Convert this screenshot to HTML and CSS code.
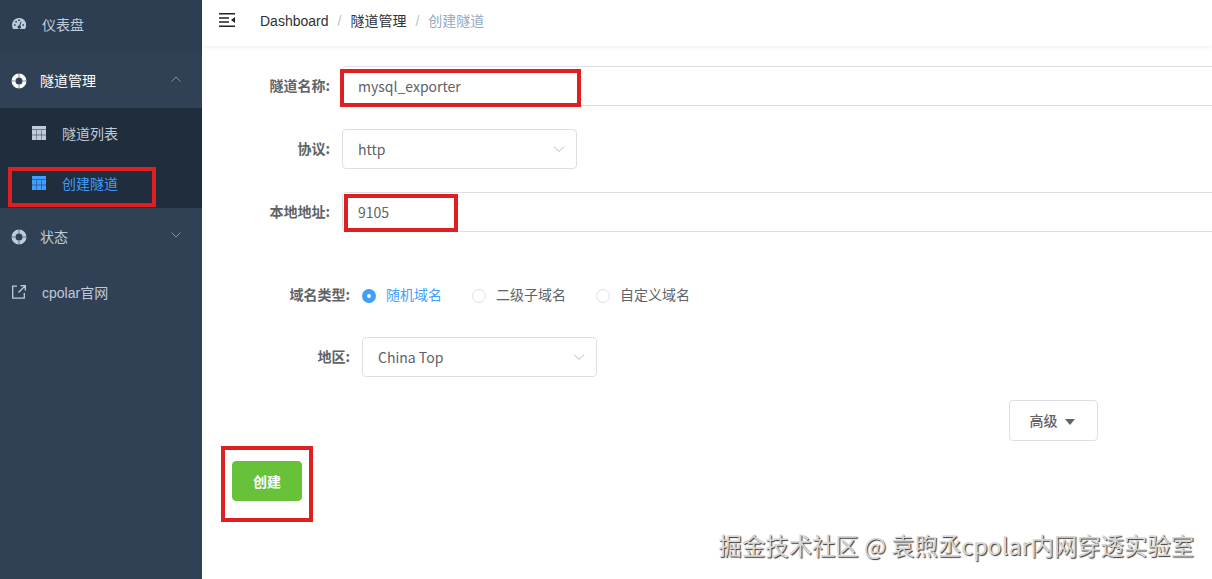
FILE: index.html
```html
<!DOCTYPE html>
<html lang="zh-CN">
<head>
    <meta charset="UTF-8">
    <meta name="viewport" content="width=device-width, initial-scale=1.0">
    <title>创建隧道</title>
    <link rel="stylesheet" href="styles.css">
</head>
<body>
    <div class="app">
        <aside class="sidebar">
            <a class="menu-item hover">
                <svg class="icon" viewBox="0 0 14 14"><path fill="currentColor" fill-rule="evenodd" d="M7 1a7 7 0 0 0-7 7c0 1.500.4 2.800 1.100 4h11.800A7 7 0 0 0 7 1zM2 7.200h1.600v1.600H2zM3.300 3.900h1.600v1.600H3.300zM6.200 2.500h1.600v1.600H6.200zM10.400 7.200H12v1.600h-1.600zM8.700 4.300l.8.300-1.300 4.100a1.600 1.600 0 1 1-1-.3z"/></svg>
                <span>仪表盘</span>
            </a>
            <a class="menu-item sub opened">
                <svg class="icon ring" viewBox="0 0 16 16"><circle cx="8" cy="8" r="5.500" fill="none" stroke="currentColor" stroke-width="4"/><path stroke="#304156" stroke-width=".6" d="M8 0v4.500M8 11.500V16M0 8h4.500M11.500 8H16"/></svg>
                <span>隧道管理</span>
                <svg class="arrow" viewBox="0 0 12 12"><path d="M1.500 8.500L6 4l4.500 4.500"/></svg>
            </a>
            <div class="submenu">
                <a class="submenu-item">
                    <svg class="icon" viewBox="0 0 14 14"><path fill="currentColor" d="M0 0h14v3.400H0zM0 4h4.500v4.800H0zM4.900 4h4.200v4.800H4.900zM9.500 4H14v4.800H9.500zM0 9.200h4.500V14H0zM4.900 9.200h4.200V14H4.900zM9.500 9.200H14V14H9.500z"/></svg>
                    <span>隧道列表</span>
                </a>
                <a class="submenu-item active">
                    <svg class="icon" viewBox="0 0 14 14"><path fill="currentColor" d="M0 0h14v3.400H0zM0 4h4.500v4.800H0zM4.900 4h4.200v4.800H4.900zM9.500 4H14v4.800H9.500zM0 9.200h4.500V14H0zM4.900 9.200h4.200V14H4.900zM9.500 9.200H14V14H9.500z"/></svg>
                    <span>创建隧道</span>
                    <i class="mark mark-menu"></i>
                </a>
            </div>
            <a class="menu-item sub">
                <svg class="icon ring" viewBox="0 0 16 16"><circle cx="8" cy="8" r="5.500" fill="none" stroke="currentColor" stroke-width="4"/><path stroke="#304156" stroke-width=".6" d="M8 0v4.500M8 11.500V16M0 8h4.500M11.500 8H16"/></svg>
                <span>状态</span>
                <svg class="arrow" viewBox="0 0 12 12"><path d="M1.500 3.500L6 8l4.500-4.500"/></svg>
            </a>
            <a class="menu-item">
                <svg class="icon" viewBox="0 0 14 14"><path fill="none" stroke="currentColor" stroke-width="1.300" d="M5 1.200H.7v12h11.600V8M8.500.7h4.800v4.800M13 1L6.500 7.500"/></svg>
                <span>cpolar官网</span>
            </a>
        </aside>

        <main class="main">
            <header class="navbar">
                <svg class="hamburger" viewBox="0 0 16 14"><path fill="currentColor" d="M0 0h16v1.500H0zM0 4.200h10v1.500H0zM0 8.300h10v1.500H0zM0 12.500h16V14H0zM16 4v6l-4-3z"/></svg>
                <nav class="breadcrumb">
                    <span>Dashboard</span>
                    <span class="separator">/</span>
                    <span>隧道管理</span>
                    <span class="separator">/</span>
                    <span class="current">创建隧道</span>
                </nav>
            </header>

            <form class="form">
                <div class="form-item">
                    <label>隧道名称:</label>
                    <div class="input">mysql_exporter</div>
                    <i class="mark mark-name"></i>
                </div>
                <div class="form-item">
                    <label>协议:</label>
                    <div class="input select">http<svg class="arrow" viewBox="0 0 12 12"><path d="M1 3.500l5 5 5-5"/></svg></div>
                </div>
                <div class="form-item">
                    <label>本地地址:</label>
                    <div class="input">9105</div>
                    <i class="mark mark-port"></i>
                </div>
                <div class="nested">
                    <div class="form-item radio-item">
                        <label>域名类型:</label>
                        <div class="radio-group">
                            <span class="radio checked">随机域名</span>
                            <span class="radio">二级子域名</span>
                            <span class="radio">自定义域名</span>
                        </div>
                    </div>
                    <div class="form-item">
                        <label>地区:</label>
                        <div class="input select">China Top<svg class="arrow" viewBox="0 0 12 12"><path d="M1 3.500l5 5 5-5"/></svg></div>
                    </div>
                </div>
                <div class="advanced">
                    <button type="button" class="btn">高级<i class="caret"></i></button>
                </div>
                <div class="footer">
                    <button type="button" class="btn btn-success">创建</button>
                    <i class="mark mark-create"></i>
                </div>
            </form>
        </main>
    </div>
    <div class="watermark">掘金技术社区 @ 袁煦丞cpolar内网穿透实验室</div>
</body>
</html>
```
FILE: styles.css
```css
*, *::before {
    box-sizing: border-box;
}

body {
    margin: 0;
    font-family: "Liberation Sans", "Noto Sans CJK SC", sans-serif;
    font-size: 14px;
    color: #606266;
    background-color: #fff;
    overflow: hidden;
}

.app {
    display: flex;
    height: 579px;
}

.sidebar {
    width: 202px;
    flex-shrink: 0;
    background-color: #304156;
    color: #bfcbd9;
}

.menu-item, .submenu-item {
    display: flex;
    align-items: center;
    position: relative;
}

.menu-item {
    height: 56px;
    padding-left: 12px;
}

.menu-item .icon, .submenu-item .icon {
    width: 14px;
    height: 14px;
    margin-right: 16px;
}

.menu-item.hover {
    height: 52px;
    padding-bottom: 4px;
    background-color: #2d3e53;
}

.menu-item.sub {
    padding-left: 11px;
}

.menu-item .ring {
    width: 16px;
    height: 16px;
    margin: 2px 13px 0 0;
}

.menu-item.opened {
    color: #fff;
}

.arrow {
    fill: none;
    stroke: #8591a0;
    width: 12px;
    height: 12px;
}

.menu-item .arrow {
    margin: 0 20px 3px auto;
}

.submenu {
    height: 100px;
    background-color: #1f2d3d;
}

.submenu-item {
    height: 50px;
    padding-left: 32px;
}

.submenu-item.active {
    color: #409eff;
}

.main {
    flex: 1;
    min-width: 0;
    overflow: hidden;
}

.navbar {
    display: flex;
    align-items: center;
    height: 46px;
    padding: 0 0 6px 17px;
    box-shadow: 0 1px 4px rgba(0, 21, 41, 0.08);
}

.hamburger {
    width: 16px;
    height: 14px;
    color: #222;
}

.breadcrumb {
    display: flex;
    align-items: baseline;
    margin-left: 25px;
    color: #303133;
}

.separator {
    margin: 0 9px;
    color: #c0c4cc;
}

.current {
    color: #97a8be;
}

.form {
    padding-top: 20px;
    font-family: "Noto Sans CJK SC", sans-serif;
}

.form-item {
    display: flex;
    position: relative;
    height: 40px;
    margin-bottom: 23px;
    line-height: 38px;
}

.form-item label {
    width: 140px;
    padding-right: 12px;
    flex-shrink: 0;
    text-align: right;
    font-weight: 700;
}

.input {
    width: 1000px;
    flex-shrink: 0;
    height: 40px;
    padding: 0 15px;
    border: 1px solid #dcdfe6;
    border-radius: 4px;
    line-height: 38px;
}

.select {
    display: flex;
    align-items: center;
    justify-content: space-between;
    width: 235px;
    padding-right: 11px;
    line-height: 40px;
}

.select .arrow {
    stroke: #b4b8c0;
}

.nested {
    padding: 20px 0 0 20px;
}

.radio-item {
    margin-bottom: 22px;
}

.radio-group {
    display: flex;
    gap: 30px;
}

.radio {
    display: flex;
    height: 38px;
}

.radio::before {
    content: "";
    width: 14px;
    height: 14px;
    margin: 14px 10px 0 0;
    border: 1px solid #dcdfe6;
    border-radius: 50%;
}

.radio.checked {
    color: #409eff;
}

.radio.checked::before {
    border: 5px solid #409eff;
}

.advanced {
    padding-right: 114px;
    text-align: right;
}

.btn {
    height: 40px;
    padding: 0 20px;
    border: 1px solid #dcdfe6;
    border-radius: 4px;
    background-color: #fff;
    color: #606266;
    font-family: inherit;
    font-size: 14px;
    font-weight: 500;
}

.caret {
    display: inline-block;
    margin: 0 3px 1px 7px;
    border: 5px solid transparent;
    border-top: 6px solid #606266;
    border-bottom: 0;
}

.advanced .btn {
    width: 89px;
    height: 41px;
    padding: 0 19px 1px;
}

.footer {
    position: relative;
    padding: 20px 0 0 30px;
}

.btn-success {
    border-color: #67c23a;
    background-color: #67c23a;
    color: #fff;
    font-weight: 700;
}

/* red highlight frames */
.mark {
    position: absolute;
    border: 4px solid #e02020;
}

.mark-menu {
    left: 8px;
    top: 9px;
    width: 148px;
    height: 40px;
}

.mark-name {
    left: 138px;
    top: 3px;
    width: 243px;
    height: 38px;
    width: 241px;
}

.mark-port {
    left: 142px;
    top: 2px;
    width: 114px;
    height: 38px;
}

.mark-create {
    left: 19px;
    top: 5px;
    width: 92px;
    height: 76px;
}

.watermark {
    position: absolute;
    right: 18px;
    bottom: 17px;
    font-family: "Noto Sans CJK SC", sans-serif;
    font-size: 23.35px;
    line-height: 34px;
    color: #d8d8d8;
    text-shadow: 1px 1px 1px #333;
}
```
